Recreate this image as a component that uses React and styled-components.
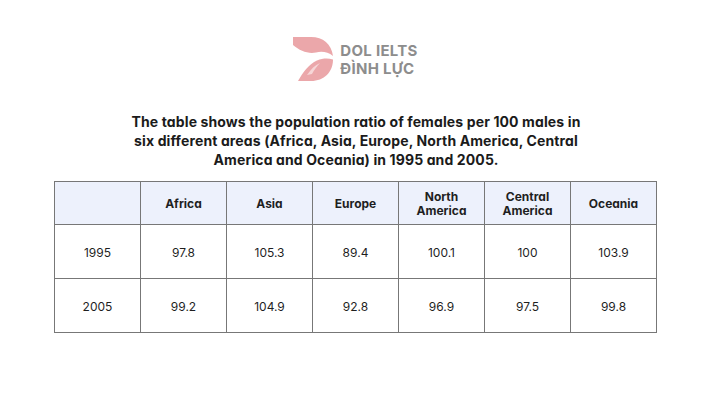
import React from "react";
import styled, { createGlobalStyle } from "styled-components";

const Global = createGlobalStyle`
  html, body { margin: 0; padding: 0; background: #ffffff; }
  body { font-family: Inter, "Noto Sans", sans-serif; font-feature-settings: "cv11" 1; }
`;

const Page = styled.div`
  width: 712px;
  height: 401px;
  display: flex;
  flex-direction: column;
  align-items: center;
  padding-top: 37px;
  box-sizing: border-box;
`;

const Logo = styled.div`
  display: flex;
  align-items: center;
  gap: 7px;
  height: 44px;
  margin-left: -1px;
`;

const LogoText = styled.div`
  display: flex;
  flex-direction: column;
  font-weight: 700;
  font-size: 15px;
  line-height: 18px;
  color: #8d8d8d;
  letter-spacing: 0.3px;
  padding-top: 2px;
`;

const Title = styled.h1`
  margin: 31px 0 0;
  font-size: 14px;
  line-height: 19px;
  font-weight: 700;
  color: #1b1b1b;
  text-align: center;
  letter-spacing: 0.12px;
`;

const Line = styled.span`
  display: block;
  white-space: nowrap;
`;

const Table = styled.table`
  margin-top: 12px;
  margin-right: 1px;
  border-collapse: collapse;
  table-layout: fixed;
  width: 602px;
  font-size: 12px;
  color: #1f1f1f;
`;

const Th = styled.th`
  height: 41px;
  padding: 1px 0 0;
  background: #edf1fc;
  border: 1px solid #777777;
  font-weight: 700;
  line-height: 14px;
  text-align: center;
  vertical-align: middle;
`;

const Td = styled.td`
  height: 51px;
  padding: 2px 0 0;
  border: 1px solid #777777;
  text-align: center;
  vertical-align: middle;
  font-weight: 400;
`;

const Col = styled.col`
  width: 86px;
`;

const LogoMark = () => (
  <svg width="40" height="44" viewBox="0 0 40 44">
    <path
      d="M0,0 H18 C30,0 38.5,7 40,19 C35,15 29,14 23,15.5 C15,17 7,14 0,8 Z"
      fill="#eba7aa"
    />
    <path
      d="M5,44 C10,35 16,27 24,23.5 C30,21 35,21 40,22.5 C40,35 31,44 18,44 Z"
      fill="#eba7aa"
    />
    <path
      d="M14,38 C18,32 22,28 27,26 C24,29 21,33 19,37 Z"
      fill="#f6d6d7"
    />
  </svg>
);

const headers = [
  ["Africa"],
  ["Asia"],
  ["Europe"],
  ["North", "America"],
  ["Central", "America"],
  ["Oceania"],
];

const rows = [
  ["1995", "97.8", "105.3", "89.4", "100.1", "100", "103.9"],
  ["2005", "99.2", "104.9", "92.8", "96.9", "97.5", "99.8"],
];

export default function App() {
  return (
    <>
      <Global />
      <Page>
        <Logo>
          <LogoMark />
          <LogoText>
            <span>DOL IELTS</span>
            <span>ĐÌNH LỰC</span>
          </LogoText>
        </Logo>
        <Title>
          <Line>The table shows the population ratio of females per 100 males in</Line>
          <Line>six different areas (Africa, Asia, Europe, North America, Central</Line>
          <Line>America and Oceania) in 1995 and 2005.</Line>
        </Title>
        <Table>
          <colgroup>
            {Array.from({ length: 7 }).map((_, i) => (
              <Col key={i} />
            ))}
          </colgroup>
          <thead>
            <tr>
              <Th />
              {headers.map((h) => (
                <Th key={h.join(" ")}>
                  {h.map((w) => (
                    <Line key={w}>{w}</Line>
                  ))}
                </Th>
              ))}
            </tr>
          </thead>
          <tbody>
            {rows.map((r) => (
              <tr key={r[0]}>
                {r.map((c, i) => (
                  <Td key={i}>{c}</Td>
                ))}
              </tr>
            ))}
          </tbody>
        </Table>
      </Page>
    </>
  );
}
